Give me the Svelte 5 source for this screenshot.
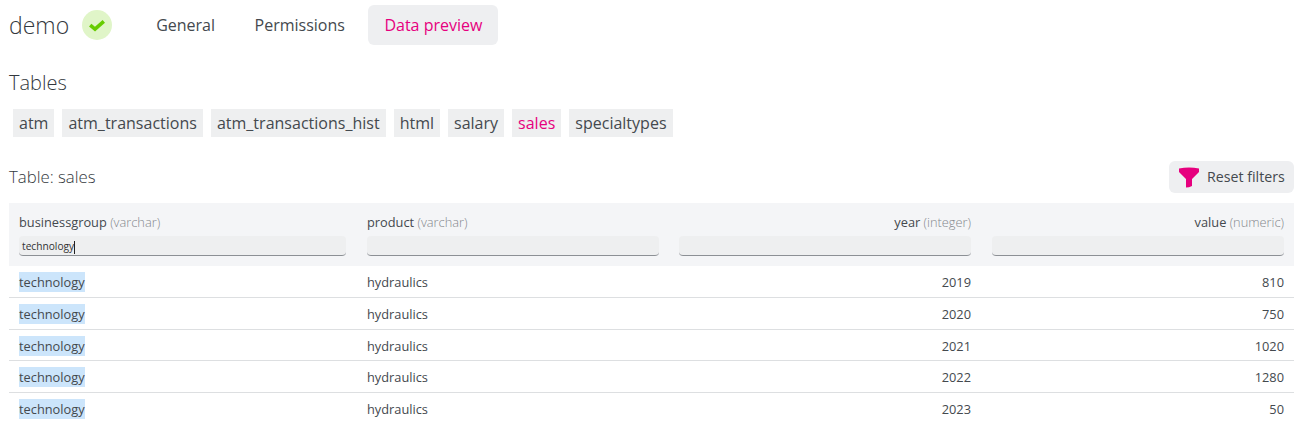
<script>
	const tabs = ['General', 'Permissions', 'Data preview'];
	const tables = ['atm', 'atm_transactions', 'atm_transactions_hist', 'html', 'salary', 'sales', 'specialtypes'];
	const columns = [
		{ name: 'businessgroup', type: 'varchar', filter: 'technology' },
		{ name: 'product', type: 'varchar', filter: '' },
		{ name: 'year', type: 'integer', filter: '', right: true },
		{ name: 'value', type: 'numeric', filter: '', right: true }
	];
	const rows = [
		[2019, 810],
		[2020, 750],
		[2021, 1020],
		[2022, 1280],
		[2023, 50]
	];
</script>

<div class="page">
	<header class="top">
		<h1>demo</h1>
		<span class="status">
			<svg width="18" height="18" viewBox="0 0 18 18">
				<path d="M2.2 9.2 L7 13.2 L15.8 5.4" fill="none" stroke="#66cc00" stroke-width="3.6" />
			</svg>
		</span>
		<nav class="tabs">
			{#each tabs as tab, i}
				<span class="tab" class:active={i === 2}>{tab}</span>
			{/each}
		</nav>
	</header>

	<h2>Tables</h2>
	<div class="chips">
		{#each tables as t}
			<span class="chip" class:selected={t === 'sales'}>{t}</span>
		{/each}
	</div>

	<div class="table-head">
		<h3>Table: sales</h3>
		<button class="reset">
			<svg width="22" height="21" viewBox="0 0 22 21">
				<path d="M1 1.5 Q11 -0.5 21 1.5 L21 5 L14 12 L14 19 Q11 20.5 8 20.5 L8 12 L1 5 Z" fill="#e6007e" />
			</svg>
			<span>Reset filters</span>
		</button>
	</div>

	<table>
		<colgroup>
			<col class="c1" />
			<col class="c2" />
			<col class="c3" />
			<col class="c2" />
		</colgroup>
		<thead>
			<tr>
				{#each columns as col}
					<th class:right={col.right}>
						<div class="col-name">{col.name} <span class="type">({col.type})</span></div>
						<div class="filter">{#if col.filter}{col.filter}<i class="caret"></i>{/if}</div>
					</th>
				{/each}
			</tr>
		</thead>
		<tbody>
			{#each rows as row}
				<tr>
					<td><mark>technology</mark></td>
					<td>hydraulics</td>
					<td class="right">{row[0]}</td>
					<td class="right">{row[1]}</td>
				</tr>
			{/each}
		</tbody>
	</table>
</div>

<style>
	:global(body) {
		margin: 0;
		background: #fff;
	}

	.page {
		font-family: 'Open Sans', sans-serif;
		color: #44494e;
		padding: 5px 11px 0 9px;
	}

	.top {
		display: flex;
		align-items: center;
		height: 40px;
	}

	h1 {
		margin: 0;
		font-size: 23px;
		font-weight: 300;
		line-height: 40px;
		color: #33383d;
	}

	.status {
		width: 30px;
		height: 30px;
		margin-left: 13px;
		border-radius: 50%;
		background: #e0f5c8;
		display: flex;
		align-items: center;
		justify-content: center;
	}

	.tabs {
		display: flex;
		gap: 7.5px;
		margin-left: 28px;
	}

	.tab {
		padding: 0 16px;
		font-size: 16px;
		line-height: 40px;
		border-radius: 6px;
	}

	.tab.active {
		background: #eeeff1;
		color: #e6007e;
	}

	h2 {
		margin: 23px 0 0;
		font-size: 20px;
		font-weight: 300;
		line-height: 30px;
		color: #33383d;
	}

	.chips {
		display: flex;
		gap: 8px;
		margin: 11px 0 0 4px;
	}

	.chip {
		padding: 0 6px;
		font-size: 16.02px;
		line-height: 28px;
		background: #eeeff0;
	}

	.chip.selected {
		color: #e6007e;
	}

	.table-head {
		display: flex;
		justify-content: space-between;
		align-items: center;
		margin-top: 24px;
		height: 32px;
	}

	h3 {
		margin: 0 0 2px;
		font-size: 16.8px;
		font-weight: 300;
		color: #33383d;
	}

	.reset {
		display: flex;
		align-items: center;
		gap: 7px;
		height: 32px;
		width: 125px;
		padding: 0 0 2px 9px;
		border: none;
		border-radius: 6px;
		background: #eeeff1;
		color: inherit;
		font-family: inherit;
		font-size: 14.2px;
	}

	.reset svg {
		margin-top: 2px;
	}

	table {
		width: 1285px;
		margin-top: 10px;
		border-collapse: collapse;
		table-layout: fixed;
		font-size: 12.8px;
	}

	.c1 {
		width: 348px;
	}

	.c2 {
		width: 312px;
	}

	.c3 {
		width: 313px;
	}

	th {
		height: 63px;
		padding: 0 10px;
		background: #f4f5f7;
		font-weight: 400;
		text-align: left;
		vertical-align: top;
	}

	th:nth-child(odd),
	td:nth-child(odd) {
		padding-right: 11px;
	}

	.col-name {
		margin-top: 9px;
		line-height: 20px;
	}

	.type {
		color: #84888d;
		font-weight: 300;
	}

	.filter {
		height: 20px;
		margin-top: 4px;
		padding-left: 3px;
		box-sizing: border-box;
		background: #eeeff0;
		border-bottom: 1px solid #8c9095;
		border-radius: 4px;
		font-size: 10.2px;
		line-height: 20px;
		text-align: left;
		color: #333;
	}

	.caret {
		display: inline-block;
		width: 1px;
		height: 13px;
		background: #222;
		vertical-align: middle;
	}

	td {
		padding: 1px 10px 0;
		box-sizing: border-box;
		height: 31.67px;
		line-height: 18px;
		border-bottom: 1px solid #dddfe1;
	}

	tbody tr:last-child td {
		border-bottom: none;
	}

	.right {
		text-align: right;
	}

	mark {
		background: #cce5fb;
		color: inherit;
		padding: 1px 0;
	}
</style>
